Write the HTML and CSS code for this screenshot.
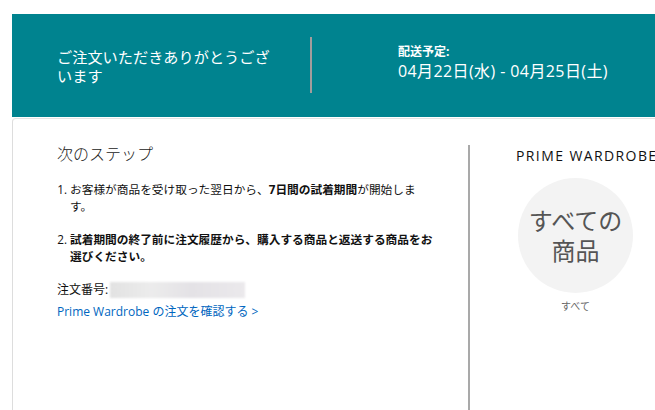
FILE: index.html
```html
<!DOCTYPE html>
<html lang="ja">
<head>
<meta charset="utf-8">
<link rel="stylesheet" href="styles.css">
</head>
<body>
<div class="page">
  <header class="banner">
    <div class="thanks">ご注文いただきありがとうございます</div>
    <div class="vline"></div>
    <div class="delivery">
      <div class="dlabel">配送予定:</div>
      <div class="ddate">04月22日(水) - 04月25日(土)</div>
    </div>
  </header>
  <main class="panel">
    <section class="steps">
      <h2 class="steps-title">次のステップ</h2>
      <ol class="step-list">
        <li>お客様が商品を受け取った翌日から、<b>7日間の試着期間</b>が開始します。</li>
        <li><b>試着期間の終了前に注文履歴から、購入する商品と返送する商品をお選びください。</b></li>
      </ol>
      <div class="order">注文番号: <span class="blur">000-0000000-0000000</span></div>
      <a class="link" href="#">Prime Wardrobe の注文を確認する &gt;</a>
    </section>
    <aside class="side">
      <div class="side-title">PRIME WARDROBE</div>
      <div class="circle">すべての<br>商品</div>
      <div class="caption">すべて</div>
    </aside>
  </main>
</div>
</body>
</html>
```
FILE: styles.css
```css
html, body {
  margin: 0;
  padding: 0;
  background: #fff;
  overflow: hidden;
}
body {
  font-family: "Open Sans", "Noto Sans CJK JP", sans-serif;
  color: #111;
}
.page {
  padding: 14px 0 0 12px;
  height: 410px;
  box-sizing: border-box;
  display: flex;
  flex-direction: column;
}
.banner {
  background: #00838f;
  height: 103px;
  display: flex;
  align-items: center;
  padding-left: 45px;
  color: #fff;
  flex: none;
}
.thanks {
  width: 215px;
  font-size: 15.2px;
  line-height: 19px;
  margin-right: 38px;
  margin-top: 2px;
}
.vline {
  width: 2px;
  height: 56px;
  background: #a39c9c;
  margin-top: -2px;
}
.delivery {
  margin-left: 86px;
  margin-top: -6px;
}
.dlabel {
  font-size: 12px;
  font-weight: bold;
  line-height: 16px;
}
.ddate {
  font-size: 16px;
  line-height: 22px;
  letter-spacing: 0.4px;
  white-space: nowrap;
}
.panel {
  flex: 1;
  margin-top: 1px;
  border-left: 1px solid #ddd;
  border-top: 1px solid #e4e4e4;
  border-top-left-radius: 4px;
  padding-top: 26px;
  display: flex;
}
.steps {
  width: 411px;
  padding-left: 44px;
  flex: none;
}
.steps-title {
  margin: 0;
  font-size: 16px;
  font-weight: 300;
  line-height: 19px;
  color: #222;
}
.step-list {
  margin: 17px 0 0;
  padding: 0 0 0 13px;
  width: 366px;
  font-size: 11.7px;
  line-height: 17px;
}
.step-list li {
  margin-bottom: 16px;
}
.step-list b {
  font-weight: bold;
}
.order {
  font-size: 12px;
  line-height: 18px;
  display: flex;
  align-items: center;
  margin-top: 2px;
}
.blur {
  display: inline-block;
  width: 135px;
  height: 16px;
  margin-left: 2px;
  background: linear-gradient(90deg, #e2e2e2, #ececec 30%, #e4e2e6 60%, #ebe9ec);
  color: transparent;
  filter: blur(1px);
}
.link {
  display: block;
  margin-top: 4px;
  font-size: 12px;
  line-height: 18px;
  color: #0066c0;
  text-decoration: none;
}
.side {
  border-left: 2px solid #a9a9a9;
  padding-left: 46px;
  display: flex;
  flex-direction: column;
  align-items: flex-start;
}
.side-title {
  font-size: 14px;
  font-weight: 400;
  line-height: 18px;
  margin-top: 2px;
  white-space: nowrap;
  color: #111;
  letter-spacing: 1.4px;
}
.circle {
  margin-top: 13px;
  margin-left: 2px;
  width: 115px;
  height: 115px;
  border-radius: 50%;
  background: #f3f3f3;
  color: #555;
  font-size: 24px;
  line-height: 30px;
  text-align: center;
  display: flex;
  align-items: center;
  justify-content: center;
}
.caption {
  width: 115px;
  margin-left: 2px;
  margin-top: 6px;
  text-align: center;
  font-size: 10px;
  line-height: 14px;
  color: #666;
}
```
